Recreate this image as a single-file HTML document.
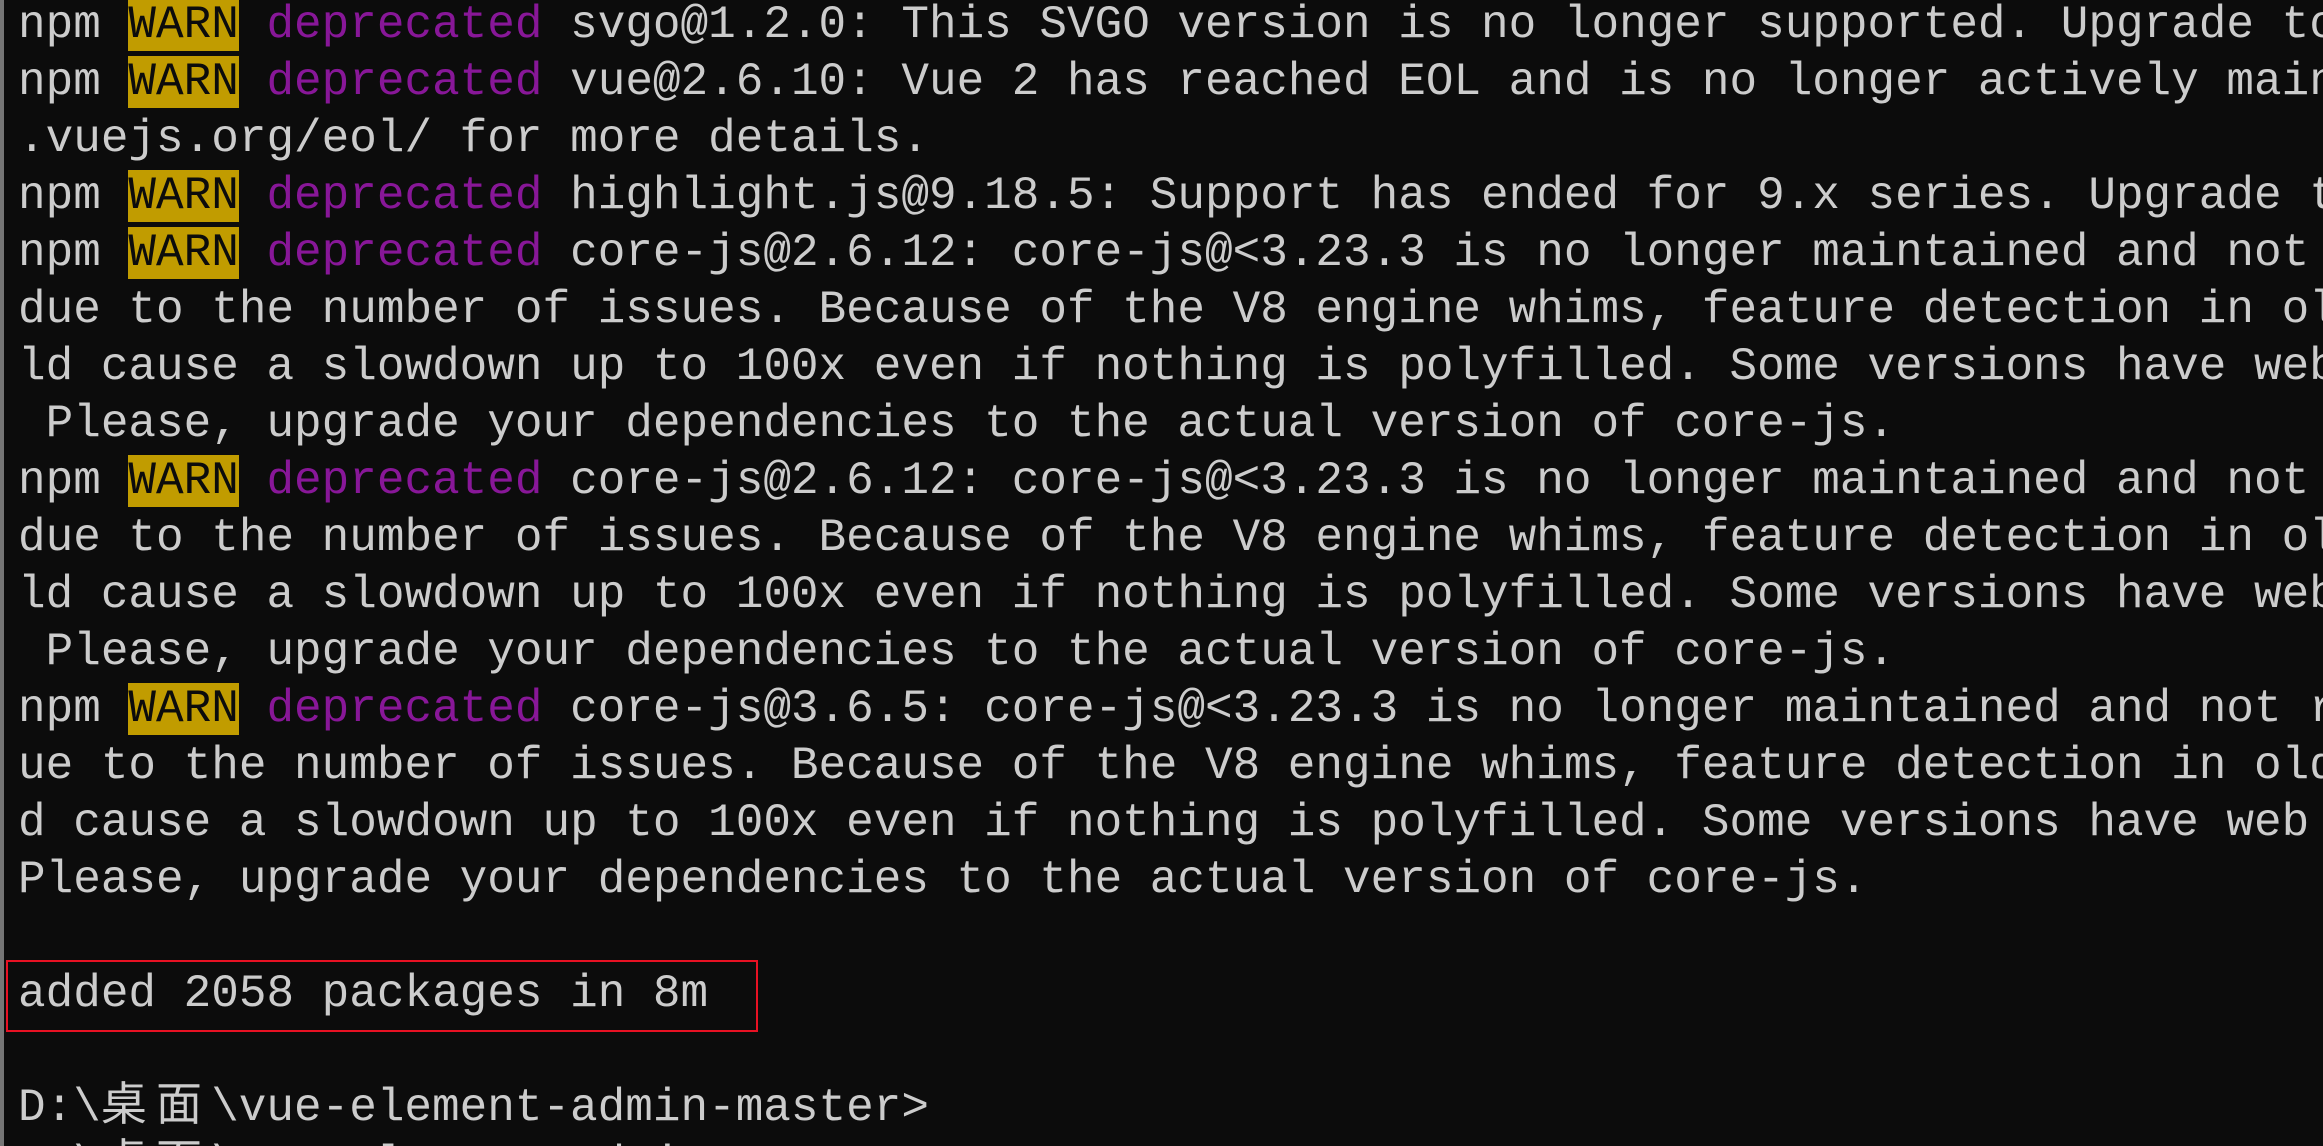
<!DOCTYPE html>
<html><head><meta charset="utf-8"><style>
html,body{margin:0;padding:0;background:#0c0c0c;width:2323px;height:1146px;overflow:hidden;}
#wrap{position:relative;width:2323px;height:1146px;overflow:hidden;background:#0c0c0c;}
#bar{position:absolute;left:0;top:0;width:4px;height:1146px;background:#767676;}
#t{position:absolute;left:18px;top:-3px;font-family:"Liberation Mono","Noto Sans CJK SC",monospace;font-size:46px;line-height:57px;color:#cccccc;}
.l{height:57px;white-space:pre;}
.w{background:#c19c00;color:#0c0c0c;}
.p{color:#881798;}
.c{display:inline-block;width:55.2px;}
#box{position:absolute;left:6px;top:960px;width:752px;height:72px;border:2px solid #e81123;box-sizing:border-box;}
</style></head><body><div id="wrap">
<div id="bar"></div>
<div id="t"><div class="l">npm <span class="w">WARN</span> <span class="p">deprecated</span> svgo@1.2.0: This SVGO version is no longer supported. Upgrade to</div><div class="l">npm <span class="w">WARN</span> <span class="p">deprecated</span> vue@2.6.10: Vue 2 has reached EOL and is no longer actively main</div><div class="l">.vuejs.org/eol/ for more details.</div><div class="l">npm <span class="w">WARN</span> <span class="p">deprecated</span> highlight.js@9.18.5: Support has ended for 9.x series. Upgrade t</div><div class="l">npm <span class="w">WARN</span> <span class="p">deprecated</span> core-js@2.6.12: core-js@&lt;3.23.3 is no longer maintained and not</div><div class="l">due to the number of issues. Because of the V8 engine whims, feature detection in ol</div><div class="l">ld cause a slowdown up to 100x even if nothing is polyfilled. Some versions have web</div><div class="l"> Please, upgrade your dependencies to the actual version of core-js.</div><div class="l">npm <span class="w">WARN</span> <span class="p">deprecated</span> core-js@2.6.12: core-js@&lt;3.23.3 is no longer maintained and not</div><div class="l">due to the number of issues. Because of the V8 engine whims, feature detection in ol</div><div class="l">ld cause a slowdown up to 100x even if nothing is polyfilled. Some versions have web</div><div class="l"> Please, upgrade your dependencies to the actual version of core-js.</div><div class="l">npm <span class="w">WARN</span> <span class="p">deprecated</span> core-js@3.6.5: core-js@&lt;3.23.3 is no longer maintained and not r</div><div class="l">ue to the number of issues. Because of the V8 engine whims, feature detection in old</div><div class="l">d cause a slowdown up to 100x even if nothing is polyfilled. Some versions have web</div><div class="l">Please, upgrade your dependencies to the actual version of core-js.</div><div class="l"> </div><div class="l">added 2058 packages in 8m</div><div class="l"> </div><div class="l">D:\<span class="c">桌</span><span class="c">面</span>\vue-element-admin-master&gt;</div><div class="l">D:\<span class="c">桌</span><span class="c">面</span>\vue-element-admin-master&gt;</div></div>
<div id="box"></div>
</div></body></html>
